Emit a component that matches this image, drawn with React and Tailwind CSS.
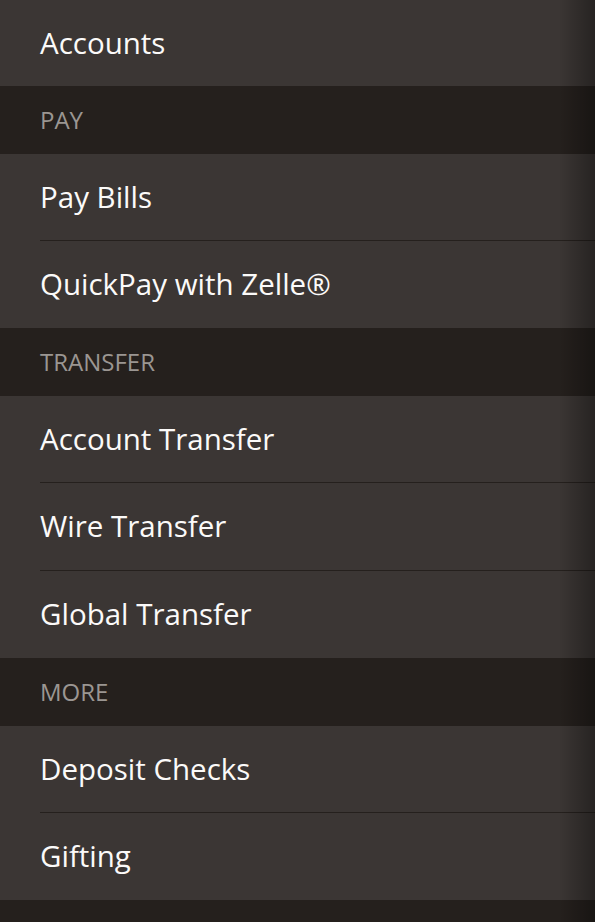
const sections = [
  { title: "PAY", items: ["Pay Bills", "QuickPay with Zelle®"], h: "h-[87px]" },
  { title: "TRANSFER", items: ["Account Transfer", "Wire Transfer", "Global Transfer"], h: "h-[87.34px]" },
  { title: "MORE", items: ["Deposit Checks", "Gifting"], h: "h-[87px]" },
];

function Item({ label, last, h }) {
  return (
    <div className={`${h} pl-10 flex flex-col bg-[#3b3634]`}>
      <div className={`flex-1 flex items-center ${last ? "" : "border-b border-[#25201d]"}`}>
        <span className="text-[29.5px] text-[#fbfaf9]">{label}</span>
      </div>
    </div>
  );
}

function Header({ title }) {
  return (
    <div className="h-[68px] pl-10 flex items-center bg-[#25201d]">
      <span className="text-[24px] text-[#9b9692]">{title}</span>
    </div>
  );
}

export default function App() {
  return (
    <div
      className="relative w-[595px] h-[922px] overflow-hidden bg-[#25201d]"
      style={{ fontFamily: '"Open Sans", "Liberation Sans", sans-serif' }}
    >
      <div className="h-[86px] pl-10 flex items-center bg-[#3b3634]">
        <span className="text-[29.5px] text-[#fbfaf9]">Accounts</span>
      </div>
      {sections.map((s) => (
        <div key={s.title}>
          <Header title={s.title} />
          {s.items.map((it, i) => (
            <Item key={it} label={it} h={s.h} last={i === s.items.length - 1} />
          ))}
        </div>
      ))}
      {/* shadow from the panel on the right */}
      <div className="absolute inset-y-0 right-0 w-[36px] pointer-events-none bg-gradient-to-l from-black/35 to-transparent" />
    </div>
  );
}
